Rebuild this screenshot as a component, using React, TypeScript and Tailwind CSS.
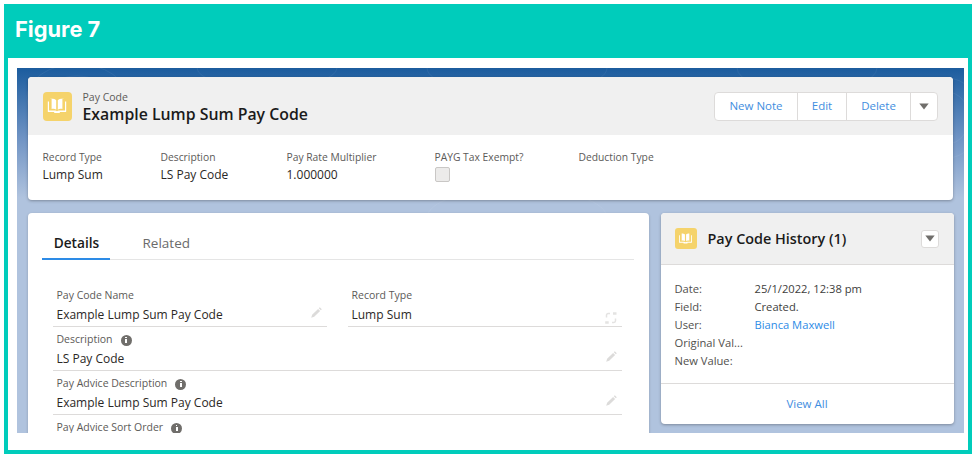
const font = "font-['Open_Sans',sans-serif]";

function BookIcon({ size }: { size: number }) {
  return (
    <svg width={size} height={size} viewBox="0 0 24 24" fill="white">
      <path d="M5 5h1.6v10c2-.4 3.7-.1 4.6.7V6.2C9.8 5 7.2 4.6 5 5z" />
      <path d="M19 5h-1.6v10c-2-.4-3.7-.1-4.6.7V6.2C14.2 5 16.800 4.600 19 5z" />
      <path d="M2.800 7.500H4v9h6.200c.8 0 1.200.3 1.800.8.600-.5 1-.8 1.800-.8H20v-9h1.200v9.900c0 .4-.3.700-.7.700h-5.700v.9H9.200v-.9H3.500c-.4 0-.7-.3-.7-.7z" />
    </svg>
  );
}

function Caret() {
  return (
    <svg width="10" height="7" viewBox="0 0 10 7" fill="#706e6b">
      <path d="M0.3 0.5h9.400L5 6.500z" />
    </svg>
  );
}

function Pencil() {
  return (
    <svg className="-mt-[6px]" width="13" height="13" viewBox="0 0 13 13" fill="#dcdbda">
      <path d="M9.800 1.200l2 2-1 1-2-2zM8.100 2.900l2 2-5.900 5.900-3 .9.900-3z" />
    </svg>
  );
}

function SwapIcon() {
  return (
    <svg className="mt-[6px]" width="14" height="14" viewBox="0 0 14 14" fill="none" stroke="#e4e3e2" strokeWidth="1.500">
      <path d="M2.500 6.500V4.200c0-1 .7-1.700 1.700-1.700H6M11.500 7.500v2.300c0 1-.7 1.700-1.700 1.700H8" />
      <path d="M9 1.200h3.500v2.600H9zM1.200 10.200h3.500v2.600H1.200z" fill="#e4e3e2" stroke="none" />
    </svg>
  );
}

function Info() {
  return (
    <span className="flex h-[11px] w-[11px] items-center justify-center rounded-full bg-[#706e6b]">
      <span className="flex flex-col items-center gap-[1px]">
        <span className="h-[1.500px] w-[1.500px] bg-white" />
        <span className="h-[4px] w-[2px] bg-white" />
      </span>
    </span>
  );
}

function Highlight({ label, value, width }: { label: string; value: string; width: string }) {
  return (
    <div className={width}>
      <div className="text-[10.300px] leading-[16px] text-[#5c5a58]">{label}</div>
      {value && <div className="mt-[1px] text-[12px] leading-[18px] text-[#2b2826]">{value}</div>}
    </div>
  );
}

function Field({
  label,
  value,
  info,
  icon,
  className,
}: {
  label: string;
  value?: string;
  info?: boolean;
  icon?: React.ReactNode;
  className?: string;
}) {
  return (
    <div className={`h-[44px] border-b border-[#dddbda] pl-1 pr-1 pt-[4px] ${className ?? ""}`}>
      <div className="flex h-[18px] items-center gap-[8px] text-[10.500px] text-[#5c5a58]">
        {label}
        {info && <Info />}
      </div>
      <div className="flex h-[20px] items-center justify-between text-[12px] text-[#2b2826]">
        {value}
        {icon}
      </div>
    </div>
  );
}

function HistoryRow({ label, children }: { label: string; children?: React.ReactNode }) {
  return (
    <div className="flex h-[18px] items-center text-[11.200px] text-[#3e3e3c]">
      <span className="w-[80px] text-[#514f4d]">{label}</span>
      {children}
    </div>
  );
}

export default function App() {
  return (
    <div className={`h-[456px] w-[976px] overflow-hidden bg-white p-1 ${font}`}>
      <div className="flex h-[450px] w-[968px] flex-col bg-[#00ccbb] px-1 pb-1">
        <div className="flex h-[52px] items-center pb-[2px] pl-[7px] font-['Inter',sans-serif] text-[21.800px] font-bold text-white">
          Figure 7
        </div>
        <div className="mt-[2px] flex-1 bg-white pb-[17px] pl-[9px] pr-[4px] pt-[10px]">
          <div className="relative h-[365px] overflow-hidden bg-[linear-gradient(180deg,#1b5c9e_0px,#6f93c4_70px,#b0c3de_130px)] pl-[10.500px] pr-[10px] pt-[9px]">
            <svg className="absolute left-0 top-0" width="947" height="160" fill="none" stroke="white" strokeOpacity="0.06">
              <ellipse cx="60" cy="30" rx="50" ry="34" />
              <ellipse cx="60" cy="30" rx="34" ry="22" />
              <ellipse cx="250" cy="0" rx="70" ry="20" />
              <ellipse cx="500" cy="0" rx="90" ry="26" />
              <ellipse cx="500" cy="150" rx="90" ry="30" />
              <ellipse cx="790" cy="0" rx="70" ry="24" />
              <ellipse cx="930" cy="50" rx="34" ry="40" />
              <ellipse cx="930" cy="50" rx="22" ry="26" />
            </svg>
            <div className="relative w-[925.500px] overflow-hidden rounded bg-white shadow-[0_1px_3px_rgba(0,0,0,0.3)]">
              <div className="flex h-[58px] items-center justify-between bg-[#f0f0f0] pl-[15px] pr-[15px]">
                <div className="flex items-center gap-[11px]">
                  <div className="flex h-[29px] w-[29px] items-center justify-center rounded bg-[#f5d36b]">
                    <BookIcon size={24} />
                  </div>
                  <div className="mt-[1px]">
                    <div className="text-[10.500px] leading-[14px] text-[#5c5a58]">Pay Code</div>
                    <div className="text-[15.850px] font-semibold leading-[20px] text-[#1b1b1b]">Example Lump Sum Pay Code</div>
                  </div>
                </div>
                <div className="flex h-[29px] items-stretch rounded border border-[#dddbda] bg-white text-[11.500px] text-[#3f8ee0]">
                  <div className="flex w-[82px] items-center justify-center">New Note</div>
                  <div className="flex w-[49px] items-center justify-center border-l border-[#dddbda]">Edit</div>
                  <div className="flex w-[64px] items-center justify-center border-l border-[#dddbda]">Delete</div>
                  <div className="flex w-[27px] items-center justify-center border-l border-[#dddbda]">
                    <Caret />
                  </div>
                </div>
              </div>
              <div className="flex h-[65px] pl-[15px] pt-[14px]">
                <Highlight label="Record Type" value="Lump Sum" width="w-[118px]" />
                <Highlight label="Description" value="LS Pay Code" width="w-[126px]" />
                <Highlight label="Pay Rate Multiplier" value="1.000000" width="w-[148px]" />
                <div className="w-[144px]">
                  <div className="text-[10.300px] leading-[16px] text-[#5c5a58]">PAYG Tax Exempt?</div>
                  <div className="mt-[2px] h-[15px] w-[15px] rounded-[2px] border border-[#c9c7c5] bg-[#ecebea]" />
                </div>
                <Highlight label="Deduction Type" value="" width="w-[100px]" />
              </div>
            </div>

            <div className="relative mt-[13px] flex items-start gap-[12px]">
              <div className="h-[240px] w-[621px] rounded-t bg-white pl-[14px] pr-[15px] shadow-[0_1px_3px_rgba(0,0,0,0.2)]">
                <div className="flex h-[47px] items-stretch border-b border-[#e5e5e5]">
                  <div className="-mb-[1px] flex w-[68px] items-center justify-center border-b-2 border-[#2d8be6] pl-[2px] pt-[15px] text-[13.700px] font-semibold text-[#1b1b1b]">
                    Details
                  </div>
                  <div className="flex items-center pl-[33px] pt-[15px] text-[13.500px] text-[#6b6b6b]">Related</div>
                </div>
                <div className="pl-[11px] pr-[12px] pt-[23px]">
                  <div className="flex gap-[21px]">
                    <Field className="w-[274px]" label="Pay Code Name" value="Example Lump Sum Pay Code" icon={<Pencil />} />
                    <Field className="w-[274px]" label="Record Type" value="Lump Sum" icon={<SwapIcon />} />
                  </div>
                  <Field label="Description" value="LS Pay Code" info icon={<Pencil />} />
                  <Field label="Pay Advice Description" value="Example Lump Sum Pay Code" info icon={<Pencil />} />
                  <Field label="Pay Advice Sort Order" info />
                </div>
              </div>

              <div className="w-[293px] overflow-hidden rounded bg-white shadow-[0_1px_3px_rgba(0,0,0,0.3)]">
                <div className="flex h-[52px] items-center justify-between border-b border-[#dddbda] bg-[#f0f0f0] pl-[14px] pr-[15px]">
                  <div className="flex items-center gap-[11px]">
                    <div className="flex h-[21px] w-[22px] items-center justify-center rounded-[3px] bg-[#f5d36b]">
                      <BookIcon size={17} />
                    </div>
                    <span className="pt-[1px] text-[14.400px] font-semibold text-[#1b1b1b]">Pay Code History (1)</span>
                  </div>
                  <div className="flex h-[18px] w-[18px] items-center justify-center rounded-[3px] border border-[#dddbda] bg-white">
                    <Caret />
                  </div>
                </div>
                <div className="h-[119px] border-b border-[#dddbda] pl-[14px] pt-[15px]">
                  <HistoryRow label="Date:">25/1/2022, 12:38 pm</HistoryRow>
                  <HistoryRow label="Field:">Created.</HistoryRow>
                  <HistoryRow label="User:">
                    <span className="text-[#2d8be6]">Bianca Maxwell</span>
                  </HistoryRow>
                  <HistoryRow label="Original Val..." />
                  <HistoryRow label="New Value:" />
                </div>
                <div className="flex h-[40px] items-center justify-center text-[11.500px] text-[#3f8ee0]">View All</div>
              </div>
            </div>
          </div>
        </div>
      </div>
    </div>
  );
}
